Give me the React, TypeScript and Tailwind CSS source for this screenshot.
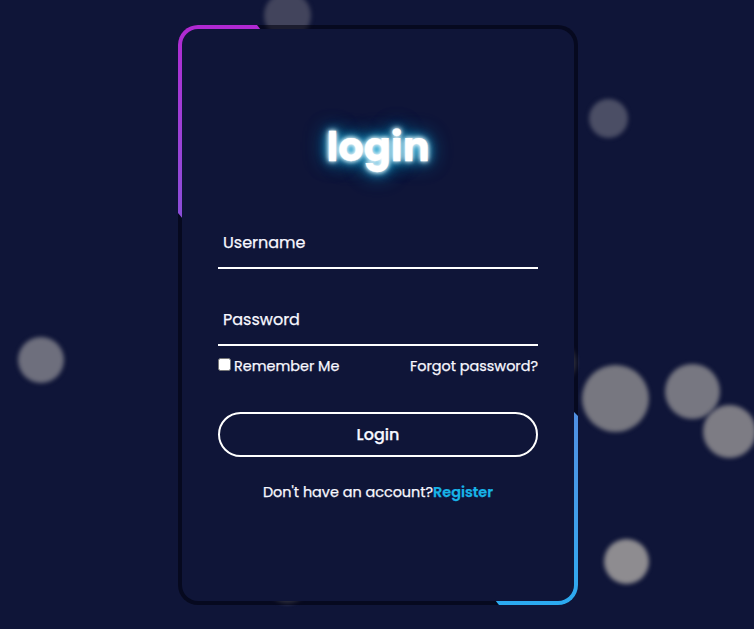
const bubbles = [
  'left-[263.5px] top-[-8px] size-[47px] bg-[#42445c]',
  'left-[588.5px] top-[98.5px] size-[39px] bg-[#4b4e65]',
  'left-[17.5px] top-[337px] size-[46px] bg-[#6e6f7d]',
  'left-[581.5px] top-[364.5px] size-[67px] bg-[#777780]',
  'left-[664.5px] top-[363.5px] size-[55px] bg-[#777781]',
  'left-[702.5px] top-[404.5px] size-[53px] bg-[#7d7c84]',
  'left-[603.5px] top-[538.5px] size-[45px] bg-[#8e8c90]',
  'left-[266px] top-[560px] size-[43px] bg-[#6e6f7d]',
  'left-[531px] top-[340px] size-[45px] bg-[#6e6f7d]',
];

function Field({ label }: { label: string }) {
  return (
    <label className="flex h-[50px] items-center border-b-2 border-white pl-[5px] text-base">
      <span>{label}</span>
    </label>
  );
}

export default function App() {
  return (
    <main className="relative isolate flex h-[629px] w-[754px] items-start justify-center overflow-hidden bg-[#0f1538] pt-[25px] pl-[2px] font-[Poppins,Inter,sans-serif] text-[#f8f8ff] [-webkit-text-stroke:0.25px]">
      {bubbles.map((b) => (
        <i key={b} className={`absolute -z-10 rounded-full blur-[2px] ${b}`} />
      ))}
      <section className="relative isolate h-[580px] w-[400px] overflow-hidden rounded-[20px] bg-[#00000c90] p-1">
        <i className="absolute inset-0 -z-10 bg-linear-to-b from-[#b028d2] to-[#8b4dd8] to-[190px] [clip-path:polygon(0_0,79px_0,83px_5px,83px_191px,5px_194px,0_188px)]" />
        <i className="absolute inset-0 -z-10 bg-linear-to-b from-[#508fe2] from-[386px] to-[#2baaf0] [clip-path:polygon(395px_386px,400px_391px,400px_580px,321px_580px,317px_575px,317px_386px)]" />
        <form className="flex h-full flex-col rounded-2xl bg-[#0f1538] px-9 pt-[86px]">
          <h1 className="h-[104px] text-center text-[40px] leading-[64px] font-bold text-white [text-shadow:0_0_4px_#fff,0_0_7px_#fffc,0_0_12px_#03bcf4,0_0_20px_#03bcf499,0_0_26px_#03bcf466]">login</h1>
          <div className="flex flex-col gap-[27px]">
            <Field label="Username" />
            <Field label="Password" />
          </div>
          <div className="mt-[9px] flex h-6 items-center justify-between text-[14.4px]">
            <label className="flex items-center gap-[3px]">
              <input type="checkbox" className="mb-[5px] size-[13px] appearance-none rounded-[2.5px] border border-[#777] bg-white" />
              <span>Remember Me</span>
            </label>
            <a className="whitespace-nowrap">Forgot password?</a>
          </div>
          <button type="button" className="mt-[33px] h-[45px] shrink-0 rounded-full border-2 border-white text-base font-medium">Login</button>
          <p className="mt-6 text-center text-[14.4px] leading-[23px] whitespace-nowrap">
            <span>Don't have an account?</span>
            <a className="font-semibold text-[#18b4e8]">Register</a>
          </p>
        </form>
      </section>
    </main>
  );
}
